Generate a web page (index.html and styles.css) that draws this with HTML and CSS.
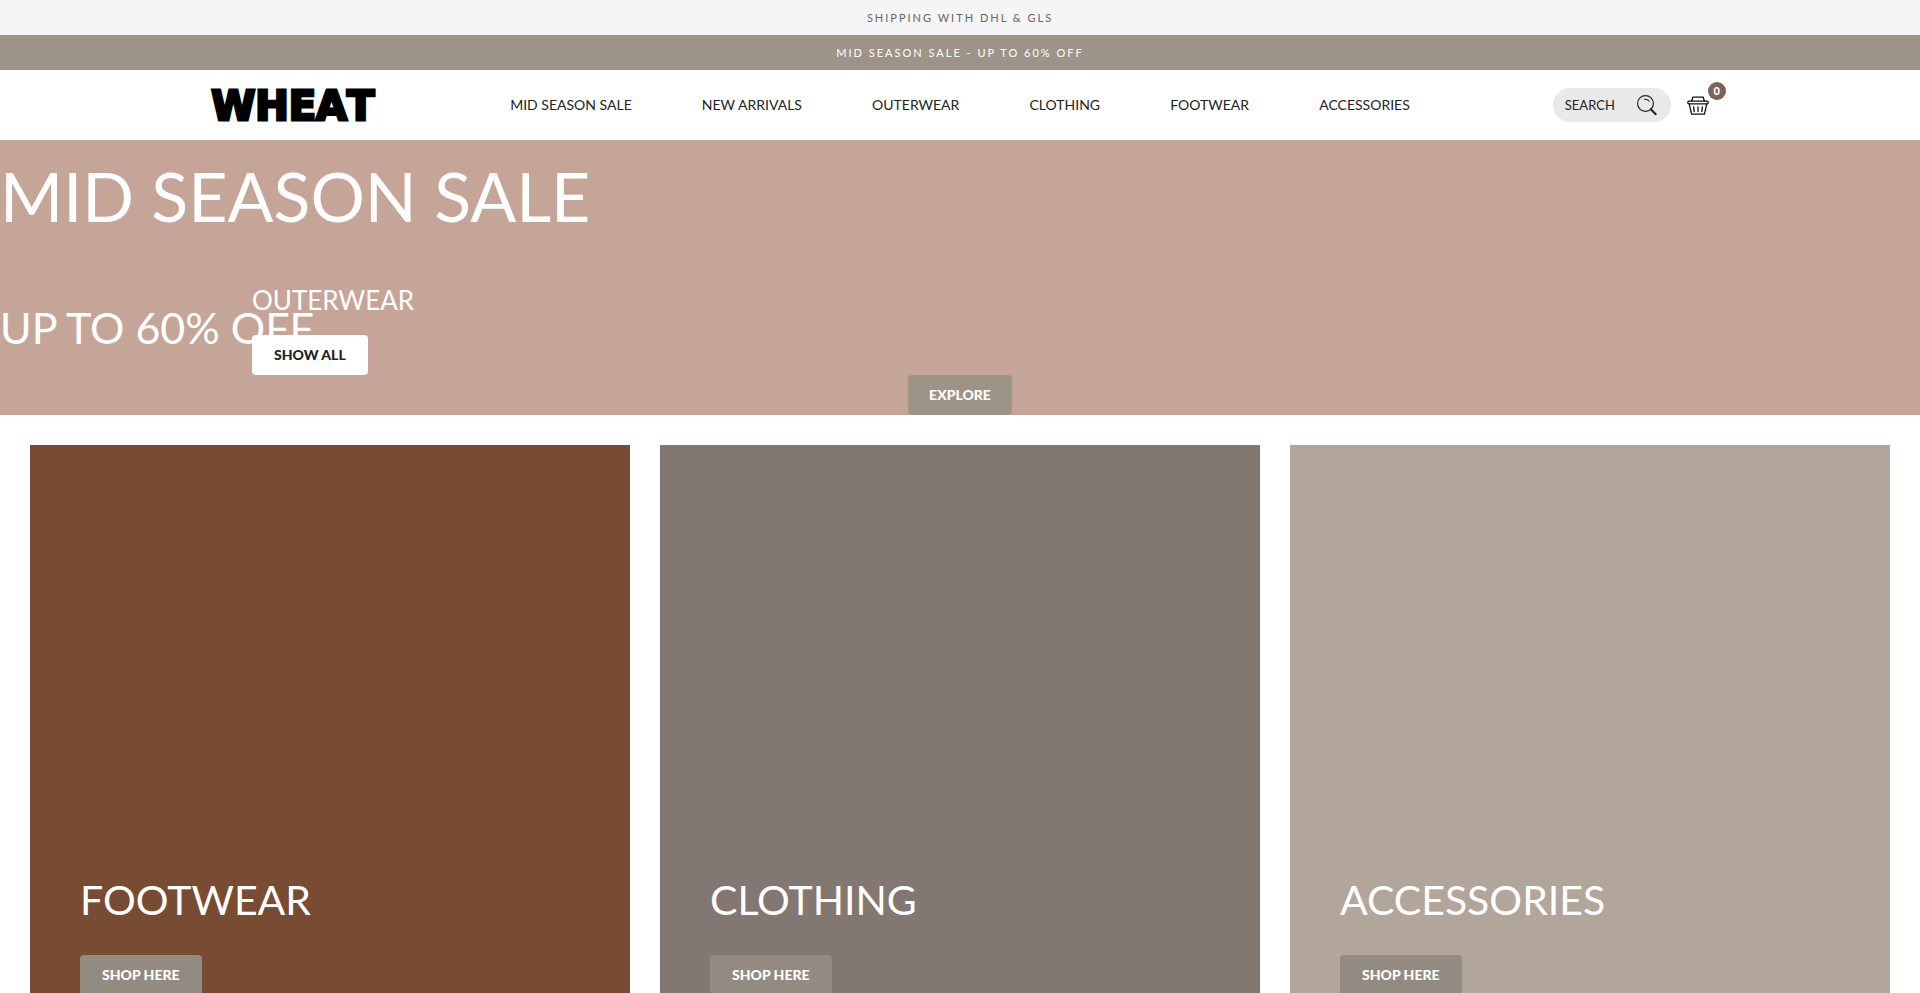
FILE: index.html
```html
<!DOCTYPE html>
<html lang="en">
<head>
<meta charset="utf-8">
<meta name="viewport" content="width=device-width, initial-scale=1">
<title>WHEAT</title>
<link rel="stylesheet" href="styles.css">
</head>
<body>
<div class="notice notice-light">SHIPPING WITH DHL &amp; GLS</div>
<div class="notice notice-sale">MID SEASON SALE - UP TO 60% OFF</div>
<header class="header">
  <a class="logo" href="#">WHEAT</a>
  <nav class="nav">
    <a href="#">MID SEASON SALE</a>
    <a href="#">NEW ARRIVALS</a>
    <a href="#">OUTERWEAR</a>
    <a href="#">CLOTHING</a>
    <a href="#">FOOTWEAR</a>
    <a href="#">ACCESSORIES</a>
  </nav>
  <div class="actions">
    <form class="search" role="search">
      <input type="text" placeholder="SEARCH" aria-label="Search">
      <button type="submit" aria-label="Submit search">
        <svg width="20" height="21" viewBox="0 0 20 21" fill="none" stroke="#222" stroke-linecap="round">
          <circle cx="8.5" cy="8.5" r="7.9" stroke-width="1.2"/>
          <path d="M7.5 4.3c2-.2 3.6.5 4.6 2" stroke-width="1.1"/>
          <path d="M13.8 14.2l4.9 5" stroke-width="2.1"/>
        </svg>
      </button>
    </form>
    <a class="basket" href="#" aria-label="Basket">
      <svg width="22" height="19" viewBox="0 0 22 19" fill="none" stroke="#111" stroke-width="1.3" stroke-linejoin="round" stroke-linecap="round">
        <path d="M4.6 5.2L5.8 1.2H16.2L17.4 5.2"/>
        <rect x=".8" y="5.2" width="20.4" height="2.6" rx="1"/>
        <path d="M2.2 7.8L4.6 18.2H17.4L19.8 7.8"/>
        <path d="M6.6 10.8l.6 4.8M11 10.8v4.8M15.4 10.8l-.6 4.8"/>
      </svg>
      <span class="badge">0</span>
    </a>
  </div>
</header>
<main>
  <section class="hero">
    <h1>MID SEASON SALE</h1>
    <h2>UP TO 60% OFF</h2>
    <a class="button button-taupe" href="#">EXPLORE</a>
    <div class="feature">
      <h3>OUTERWEAR</h3>
      <a class="button button-white" href="#">SHOW ALL</a>
    </div>
  </section>
  <section class="cards">
    <article class="card card-footwear"><h2>FOOTWEAR</h2><a class="button button-gray" href="#">SHOP HERE</a></article>
    <article class="card card-clothing"><h2>CLOTHING</h2><a class="button button-gray" href="#">SHOP HERE</a></article>
    <article class="card card-accessories"><h2>ACCESSORIES</h2><a class="button button-gray" href="#">SHOP HERE</a></article>
  </section>
</main>
</body>
</html>
```
FILE: styles.css
```css
* { box-sizing: border-box; }
body { margin: 0; background: #fff; color: #222; font-family: Lato, "Open Sans", sans-serif; font-size: 14px; }
a { color: inherit; text-decoration: none; }
h1, h2, h3 { margin: 0; font-weight: 400; }

.notice { height: 35px; line-height: 35px; text-align: center; font-size: 11px; letter-spacing: 2px; }
.notice-light { background: #f5f5f5; color: #666; }
.notice-sale { background: #9e9387; color: #fff; }

.header { display: grid; grid-template-columns: 299px 1fr 143px 156px; height: 70px; padding: 0 11%; align-items: center; }
.logo { padding-top: 2px; color: #000; font-family: "DejaVu Sans", sans-serif; font-size: 40px; font-weight: 700; font-kerning: none; line-height: 40px; -webkit-text-stroke: 3px #000; }
.nav { display: flex; justify-content: space-between; padding-bottom: 2px; }
.actions { display: flex; grid-column: 4; align-items: center; gap: 16px; }
.search { display: flex; align-items: center; width: 118px; height: 34px; padding: 0 14px 0 12px; border-radius: 17px; background: #e9e9e9; }
.search input { flex: 1; min-width: 0; padding: 0; border: 0; background: none; font: inherit; font-size: 13px; outline: 0; }
.search input::placeholder { color: #222; opacity: 1; }
.search button { display: flex; padding: 0; border: 0; background: none; }
.basket { position: relative; display: flex; }
.badge { position: absolute; top: -14px; right: -17px; width: 18px; height: 18px; border-radius: 50%; background: #7c625b; color: #fff; font-size: 11px; font-weight: 900; line-height: 18px; text-align: center; }

.hero { position: relative; display: flex; flex-direction: column; padding-top: 6px; background: #c6a599; color: #fff; }
.hero h1 { font-size: 68px; line-height: 100px; }
.hero h2 { margin: 50px 0 15px; font-size: 43px; line-height: 64px; }
.feature { position: absolute; top: 140px; left: 252px; }
.feature h3 { margin-bottom: 15px; font-size: 26px; line-height: 40px; }
.button { display: inline-block; height: 40px; padding: 0 22px; border-radius: 4px; font-size: 14px; font-weight: 900; line-height: 40px; }
.button-taupe { align-self: center; padding: 0 21px; background: #9e9387; color: #fff; }
.button-white { background: #fff; color: #222; }
.button-gray { background: #938b81; color: #fff; }

.cards { display: grid; grid-template-columns: repeat(3, 1fr); gap: 30px; padding: 30px; }
.card { display: flex; flex-direction: column; justify-content: flex-end; align-items: flex-start; aspect-ratio: 1; padding: 50px; color: #fff; }
.card h2 { margin-bottom: 25px; font-size: 41px; line-height: 60px; }
.card-footwear { background: #784c32; }
.card-clothing { background: #827871; }
.card-accessories { background: #b2a69b; }
```
